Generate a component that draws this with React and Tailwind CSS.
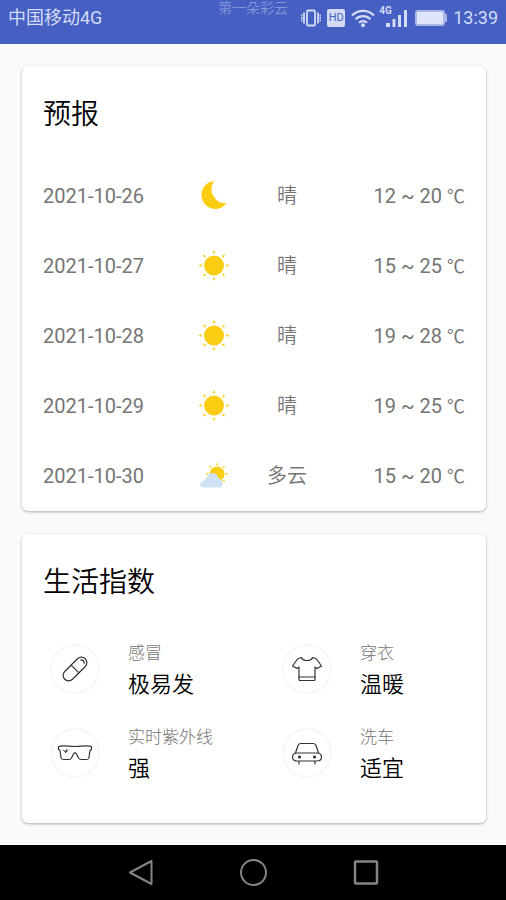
import React from 'react';

const forecast = [
  { date: '2021-10-26', icon: 'moon', text: '晴', temp: '12 ~ 20' },
  { date: '2021-10-27', icon: 'sun', text: '晴', temp: '15 ~ 25' },
  { date: '2021-10-28', icon: 'sun', text: '晴', temp: '19 ~ 28' },
  { date: '2021-10-29', icon: 'sun', text: '晴', temp: '19 ~ 25' },
  { date: '2021-10-30', icon: 'cloudy', text: '多云', temp: '15 ~ 20' },
];

const lifeIndex = [
  { icon: 'pill', label: '感冒', value: '极易发' },
  { icon: 'shirt', label: '穿衣', value: '温暖' },
  { icon: 'glasses', label: '实时紫外线', value: '强' },
  { icon: 'car', label: '洗车', value: '适宜' },
];

const rays = [0, 45, 90, 135, 180, 225, 270, 315];

function Moon() {
  return (
    <svg className="h-8 w-8" viewBox="0 0 32 32" fill="#fbcd12">
      <path d="M16 1A14 14 0 1 0 28.500 23.500A14.500 14.500 0 0 1 16 1Z" />
    </svg>
  );
}

function Sun() {
  return (
    <svg className="h-8 w-8" viewBox="0 0 32 32" fill="#fbcd12">
      <circle cx="16" cy="15.500" r="10" />
      {rays.map((a) => (
        <path key={a} d="M15 3L16 .5l1 2.500Z" stroke="#fbcd12" strokeWidth="0.5" transform={`rotate(${a} 16 15.5)`} />
      ))}
    </svg>
  );
}

function Cloudy() {
  return (
    <svg className="h-8 w-8" viewBox="0 0 32 32">
      <g fill="#fbcd12">
        <circle cx="19" cy="14" r="7.500" />
        {rays.map((a) => (
          <path key={a} d="M18.200 5l.8-2 .8 2Z" stroke="#fbcd12" strokeWidth="0.5" transform={`rotate(${a} 19 14)`} />
        ))}
      </g>
      <path d="M5 27.500c-3.500 0-3.500-4-1-5.500 2-1.500 4-4 6-6.500 3.500-4.500 9-2.500 10.500 2.500 3 1 4.500 3 4 5 .5 2.500-.5 4.500-2.500 4.500Z" fill="#cfe3f5" />
    </svg>
  );
}

const weatherIcons = { moon: Moon, sun: Sun, cloudy: Cloudy };

const lineIcons = {
  pill: (
    <g transform="rotate(45 18 18)">
      <rect x="12.500" y="3.500" width="11" height="29" rx="5.500" />
      <path d="M12.500 18h11M15.500 7.500c1.500-1.500 3.500-1.500 5 0" />
    </g>
  ),
  shirt: (
    <>
      <path d="M12.500 6.500L8.500 8 3.500 15l4.500 2.500 2-1.500v12.500a1 1 0 0 0 1 1h14a1 1 0 0 0 1-1V16l2 1.500 4.500-2.500-5-7-4-1.500c-.5 2-2.500 3-5.500 3s-5-1-5.500-3Z" />
      <path d="M10 26h16" />
    </>
  ),
  glasses: (
    <>
      <path d="M1.500 11.500c5-1.500 10 0 16.500 0s11.500-1.500 16.500 0v3l-1.500 1-1 7a2.500 2.500 0 0 1-2.500 2h-5.500a3 3 0 0 1-2.500-1.500l-2-4a1.600 1.600 0 0 0-3 0l-2 4a3 3 0 0 1-2.500 1.500H6.500a2.500 2.500 0 0 1-2.500-2l-1-7-1.500-1Z" />
      <path d="M6.500 15l2 2.500M9.500 14.500l-1 3 2.500-2" strokeWidth="1" />
    </>
  ),
  car: (
    <>
      <path d="M6.500 18l2.500-7.500a3 3 0 0 1 2.500-2h13a3 3 0 0 1 2.500 2l2.500 7.500" />
      <path d="M8 18h20c2.500 0 4.500 1.500 4.500 4s-2 4-4.500 4H8c-2.500 0-4.500-1.500-4.500-4s2-4 4.500-4ZM10 26v3M26 26v3" />
      <circle cx="10.500" cy="22" r="1" fill="#333" />
      <circle cx="25.500" cy="22" r="1" fill="#333" />
    </>
  ),
};

function StatusBar() {
  return (
    <header className="relative flex h-11 items-start justify-between bg-[#465fc2] px-2 pt-1 text-lg text-[#d3dbf6]">
      <span>中国移动4G</span>
      <span className="absolute inset-x-0 top-0 text-center text-[14px] leading-4 font-[350] text-[#8896d8]">第一朵彩云</span>
      <div className="flex h-7 items-center gap-[6px]">
        <svg className="h-5 w-5" viewBox="0 0 20 20" fill="none" stroke="currentColor" strokeWidth="1.800">
          <rect x="6" y="2.500" width="8" height="15" rx="1" />
          <path d="M3 4.500v11M17 4.500v11" />
          <path d="M.8 6.500v7M19.200 6.500v7" strokeWidth="1.300" strokeDasharray="2 0.5" />
        </svg>
        <span className="flex h-[18px] w-[18px] items-center justify-center rounded-xs bg-[#d3dbf6] text-[11px] text-[#465fc2]">HD</span>
        <svg className="h-5 w-6" viewBox="0 0 24 20" fill="none" stroke="currentColor" strokeWidth="2.200">
          <path d="M1 7.500a15.500 15.500 0 0 1 22 0M4.500 11.200a10.600 10.600 0 0 1 15 0M8 14.700a5.700 5.700 0 0 1 8 0" />
          <circle cx="12" cy="17.300" r="2" fill="currentColor" stroke="none" />
        </svg>
        <div className="relative">
          <span className="absolute -top-[3px] -left-[2px] text-[10px] leading-3 font-bold">4G</span>
          <svg className="h-5 w-7" viewBox="0 0 28 20" fill="currentColor">
            <path d="M5 15h4v4H5zM11.500 11h3v8h-3zM17 7h3v12h-3zM23 2h3v17h-3z" />
          </svg>
        </div>
        <svg className="h-5 w-8" viewBox="0 0 32 20">
          <rect x="0" y="2" width="30" height="16" rx="3" fill="#aab6e6" />
          <rect x="2" y="4" width="26" height="12" rx="1" fill="#dfe5fa" />
          <path d="M30 6h2v8h-2z" fill="#aab6e6" />
        </svg>
        <span>13:39</span>
      </div>
    </header>
  );
}

function Card({ title, children }) {
  return (
    <section className="rounded-md bg-white pt-7 shadow-[0_1px_3px_rgba(0,0,0,0.3)]">
      <h2 className="px-[21px] text-[28px] leading-[42px] font-[350] text-black">{title}</h2>
      {children}
    </section>
  );
}

function NavBar() {
  return (
    <nav className="mt-auto flex h-14 items-center justify-center gap-20 bg-black text-[#858585]">
      <button aria-label="Back" className="h-8 w-8">
        <svg viewBox="0 0 32 32" fill="none" stroke="currentColor" strokeWidth="2" strokeLinejoin="round">
          <path d="M5 15.500L26.500 4v23Z" />
        </svg>
      </button>
      <button aria-label="Home" className="h-8 w-8">
        <svg viewBox="0 0 32 32" fill="none" stroke="currentColor" strokeWidth="2">
          <circle cx="16.500" cy="15.500" r="12.500" />
        </svg>
      </button>
      <button aria-label="Recent" className="h-8 w-8">
        <svg viewBox="0 0 32 32" fill="none" stroke="currentColor" strokeWidth="2.500">
          <rect x="6" y="4.500" width="22" height="22" rx="1" />
        </svg>
      </button>
    </nav>
  );
}

function App() {
  return (
    <div className="flex min-h-screen flex-col bg-[#fafafa] font-[Roboto,'Noto_Sans_CJK_SC',sans-serif]">
      <StatusBar />
      <main className="flex flex-col gap-[23px] py-[22px] pr-5 pl-[22px]">
        <Card title="预报">
          <ul className="mt-[25px] px-[21px] text-xl text-[#757575]">
            {forecast.map((day) => {
              const Icon = weatherIcons[day.icon];
              return (
                <li key={day.date} className="grid h-[70px] grid-cols-[142fr_58fr_88fr_134fr] items-center">
                  <span>{day.date}</span>
                  <span className="flex justify-center"><Icon /></span>
                  <span className="text-center font-[350]">{day.text}</span>
                  <span className="text-right">{day.temp} <span className="text-lg">℃</span></span>
                </li>
              );
            })}
          </ul>
        </Card>

        <Card title="生活指数">
          <div className="mt-[23px] grid grid-cols-2 pb-7">
            {lifeIndex.map((item) => (
              <div key={item.label} className="flex h-[84px] items-center gap-7 pl-7">
                <div className="flex h-[50px] w-[50px] items-center justify-center rounded-full border-2 border-[#f7f7f7]">
                  <svg className="h-9 w-9" viewBox="0 0 36 36" fill="none" stroke="#333" strokeWidth="1.200" strokeLinecap="round" strokeLinejoin="round">
                    {lineIcons[item.icon]}
                  </svg>
                </div>
                <div>
                  <p className="text-[17px] leading-8 font-light text-[#757575]">{item.label}</p>
                  <p className="text-[22px] leading-8 font-[350] text-black">{item.value}</p>
                </div>
              </div>
            ))}
          </div>
        </Card>
      </main>
      <NavBar />
    </div>
  );
}

export default App;
